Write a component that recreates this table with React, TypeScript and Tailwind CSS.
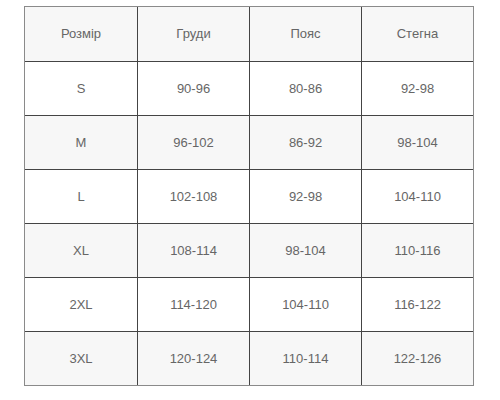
const rows = [
  ["Розмір", "Груди", "Пояс", "Стегна"],
  ["S", "90-96", "80-86", "92-98"],
  ["M", "96-102", "86-92", "98-104"],
  ["L", "102-108", "92-98", "104-110"],
  ["XL", "108-114", "98-104", "110-116"],
  ["2XL", "114-120", "104-110", "116-122"],
  ["3XL", "120-124", "110-114", "122-126"],
];

export default function App() {
  return (
    <div className="w-[500px] h-[400px] bg-white pl-[24px] pt-[6px]" style={{ fontFamily: '"Liberation Sans", Arial, sans-serif' }}>
      <div className="w-[450px] border border-[#8a8a8a]">
        {rows.map((row, i) => (
          <div
            key={i}
            className={`grid grid-cols-4 h-[54px] ${i > 0 ? "border-t border-[#444]" : ""} ${i % 2 === 0 ? "bg-[#f7f7f7]" : "bg-white"}`}
          >
            {row.map((cell, j) => (
              <div
                key={j}
                className={`flex items-center justify-center text-[13px] text-[#666] ${j > 0 ? "border-l border-[#444]" : ""}`}
              >
                {cell}
              </div>
            ))}
          </div>
        ))}
      </div>
    </div>
  );
}
